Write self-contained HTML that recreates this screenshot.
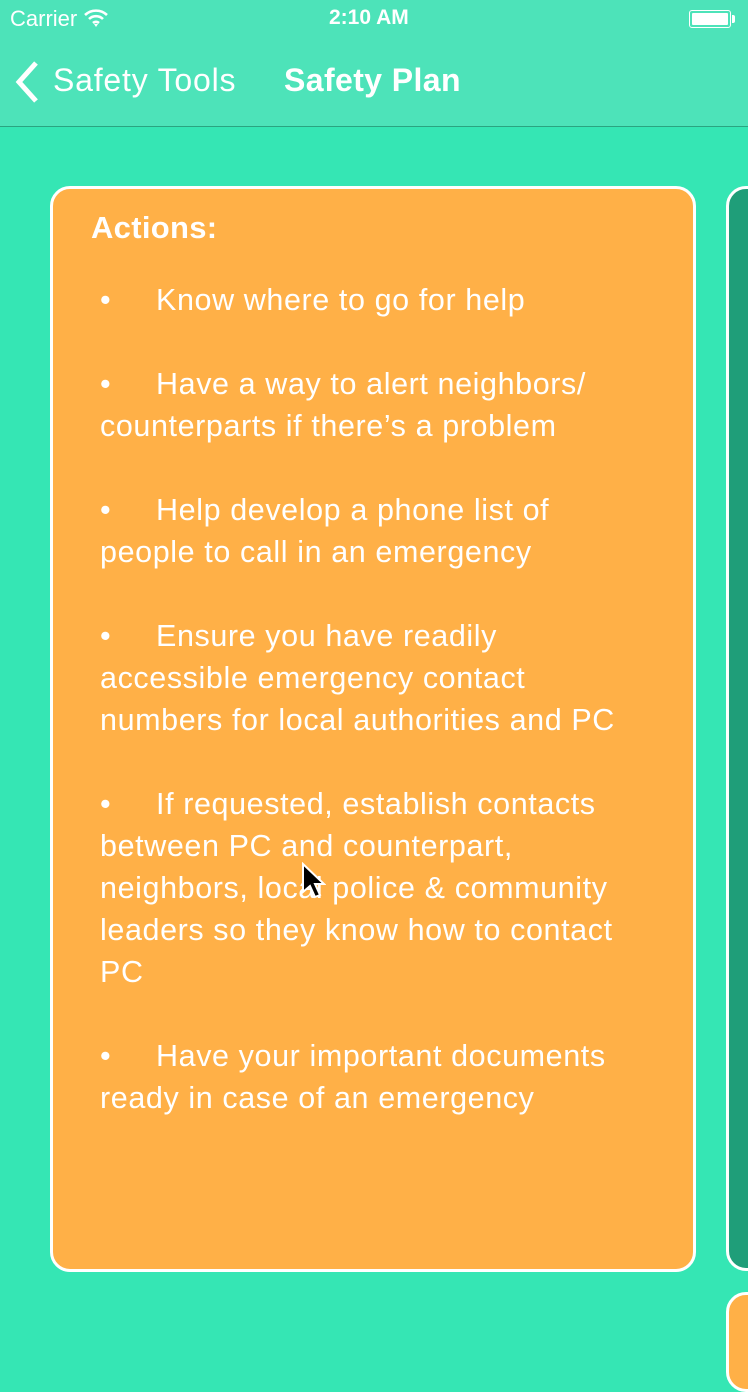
<!DOCTYPE html>
<html><head><meta charset="utf-8"><style>
*{margin:0;padding:0;box-sizing:border-box}
body{width:748px;height:1332px;overflow:hidden;background:#35e6b4;font-family:"Liberation Sans",sans-serif;color:#fff;position:relative}
.nav{position:absolute;left:0;top:0;width:748px;height:127px;background:#4de3b9;border-bottom:1px solid #2aa581}
.st{position:absolute;top:6px;font-size:22px}
.card{position:absolute;left:50px;top:186px;width:646px;height:1086px;background:#ffb047;border:3px solid #fff;border-radius:20px}
.card2{position:absolute;left:726px;top:186px;width:60px;height:1085px;background:#1f9e79;border:3px solid #fff;border-radius:20px}
.card3{position:absolute;left:726px;top:1292px;width:60px;height:100px;background:#ffb047;border:3px solid #fff;border-radius:20px}
h1{position:absolute;left:38px;top:21px;font-size:31px;font-weight:bold;letter-spacing:0.3px}
.list{position:absolute;left:47px;top:90px;width:600px;font-size:30.5px;line-height:42px;letter-spacing:0.6px;white-space:nowrap}
.list p{margin-bottom:42px}
.b{display:inline-block;width:56px}
</style></head><body>
<div class="nav">
<div class="st" style="left:10px">Carrier
<svg width="26" height="20" viewBox="0 0 26 20" style="vertical-align:-2px"><path d="M2 7a16 16 0 0 1 22 0M6 11a10 10 0 0 1 14 0M10 15a4.5 4.5 0 0 1 6 0" stroke="#fff" stroke-width="2.6" fill="none"/><path d="M11 16l2 3 2-3z" fill="#fff"/></svg></div>
<div class="st" style="left:329px;font-weight:bold;font-size:21px">2:10 AM</div>
<div style="position:absolute;left:689px;top:10px;width:42px;height:18px;border:1.5px solid #fff;border-radius:3px;padding:2px"><div style="background:#fff;width:100%;height:100%;border-radius:1px"></div></div>
<div style="position:absolute;left:732px;top:15px;width:3px;height:8px;background:#fff;border-radius:0 2px 2px 0"></div>
<svg style="position:absolute;left:12px;top:60px" width="30" height="44" viewBox="0 0 30 44"><path d="M24 3L7 22l17 19" stroke="#fff" stroke-width="5" fill="none"/></svg>
<div style="position:absolute;left:53px;top:62px;font-size:32px;letter-spacing:0.8px">Safety Tools</div>
<div style="position:absolute;left:284px;top:62px;font-size:32px;font-weight:bold;letter-spacing:0.4px">Safety Plan</div>
</div>
<div class="card">
<h1>Actions:</h1>
<div class="list">
<p><span class="b">&bull;</span>Know where to go for help</p>
<p><span class="b">&bull;</span>Have a way to alert neighbors/<br>counterparts if there’s a problem</p>
<p><span class="b">&bull;</span>Help develop a phone list of<br>people to call in an emergency</p>
<p><span class="b">&bull;</span>Ensure you have readily<br>accessible emergency contact<br>numbers for local authorities and PC</p>
<p><span class="b">&bull;</span>If requested, establish contacts<br>between PC and counterpart,<br>neighbors, local police &amp; community<br>leaders so they know how to contact<br>PC</p>
<p><span class="b">&bull;</span>Have your important documents<br>ready in case of an emergency</p>
</div>
</div>
<div class="card2"></div>
<div class="card3"></div>
<svg style="position:absolute;left:300px;top:862px" width="26" height="38" viewBox="0 0 26 38"><path d="M3 2v28l7-6 5 11 5-2-5-11h9z" fill="#000" stroke="#fff" stroke-width="2"/></svg>
</body></html>
